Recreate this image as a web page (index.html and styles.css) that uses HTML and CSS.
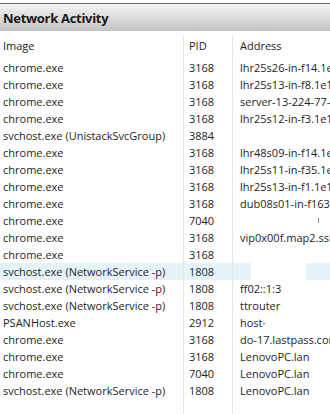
FILE: index.html
```html
<!DOCTYPE html>
<html lang="en">
<head>
    <meta charset="UTF-8">
    <meta name="viewport" content="width=device-width, initial-scale=1.0">
    <title>Network Activity</title>
    <link rel="stylesheet" href="styles.css">
</head>
<body>
    <div class="panel">
        <div class="titlebar">Network Activity</div>

        <div class="list">
            <div class="row head">
                <div class="cell">Image</div>
                <div class="cell pid">PID</div>
                <div class="cell addr">Address</div>
            </div>
            <div class="row"><div class="cell">chrome.exe</div><div class="cell pid">3168</div><div class="cell addr">lhr25s26-in-f14.1e100.net</div></div>
            <div class="row"><div class="cell">chrome.exe</div><div class="cell pid">3168</div><div class="cell addr">lhr25s13-in-f8.1e100.net</div></div>
            <div class="row"><div class="cell">chrome.exe</div><div class="cell pid">3168</div><div class="cell addr">server-13-224-77-4.lhr62.r.cloudfront.net</div></div>
            <div class="row"><div class="cell">chrome.exe</div><div class="cell pid">3168</div><div class="cell addr">lhr25s12-in-f3.1e100.net</div></div>
            <div class="row"><div class="cell">svchost.exe (UnistackSvcGroup)</div><div class="cell pid">3884</div><div class="cell addr"></div></div>
            <div class="row"><div class="cell">chrome.exe</div><div class="cell pid">3168</div><div class="cell addr">lhr48s09-in-f14.1e100.net</div></div>
            <div class="row"><div class="cell">chrome.exe</div><div class="cell pid">3168</div><div class="cell addr">lhr25s11-in-f35.1e100.net</div></div>
            <div class="row"><div class="cell">chrome.exe</div><div class="cell pid">3168</div><div class="cell addr">lhr25s13-in-f1.1e100.net</div></div>
            <div class="row"><div class="cell">chrome.exe</div><div class="cell pid">3168</div><div class="cell addr">dub08s01-in-f163.1e100.net</div></div>
            <div class="row"><div class="cell">chrome.exe</div><div class="cell pid">7040</div><div class="cell addr"><span class="tick"></span></div></div>
            <div class="row"><div class="cell">chrome.exe</div><div class="cell pid">3168</div><div class="cell addr">vip0x00f.map2.ssl.hwcdn.net</div></div>
            <div class="row"><div class="cell">chrome.exe</div><div class="cell pid">3168</div><div class="cell addr"></div></div>
            <div class="row hot"><div class="cell">svchost.exe (NetworkService -p)</div><div class="cell pid">1808</div><div class="cell addr"><span class="ghost"></span></div></div>
            <div class="row"><div class="cell">svchost.exe (NetworkService -p)</div><div class="cell pid">1808</div><div class="cell addr">ff02::1:3</div></div>
            <div class="row"><div class="cell">svchost.exe (NetworkService -p)</div><div class="cell pid">1808</div><div class="cell addr">ttrouter</div></div>
            <div class="row"><div class="cell">PSANHost.exe</div><div class="cell pid">2912</div><div class="cell addr">host&middot;</div></div>
            <div class="row"><div class="cell">chrome.exe</div><div class="cell pid">3168</div><div class="cell addr">do-17.lastpass.com</div></div>
            <div class="row"><div class="cell">chrome.exe</div><div class="cell pid">3168</div><div class="cell addr">LenovoPC.lan</div></div>
            <div class="row"><div class="cell">chrome.exe</div><div class="cell pid">7040</div><div class="cell addr">LenovoPC.lan</div></div>
            <div class="row"><div class="cell">svchost.exe (NetworkService -p)</div><div class="cell pid">1808</div><div class="cell addr">LenovoPC.lan</div></div>
            <div class="row filler"><div class="cell"></div><div class="cell pid"></div><div class="cell addr"></div></div>
        </div>
    </div>
</body>
</html>
```

FILE: styles.css
```css
html, body {
    height: 100%;
}

body {
    margin: 0;
    background-color: #fff;
    font-family: 'Open Sans', 'Noto Sans', sans-serif;
    font-size: 11px;
    color: #1e1e1e;
    overflow: hidden;
}

.panel {
    display: flex;
    flex-direction: column;
    height: 100%;
    padding-top: 3px;
    box-sizing: border-box;
}

.titlebar {
    height: 27px;
    padding-left: 3px;
    border-top: 1px solid #6a6a6a;
    background: linear-gradient(#f4f4f4, #c4c4c4);
    font-size: 13px;
    font-weight: bold;
    letter-spacing: -0.3px;
    line-height: 28px;
    color: #1a1a1a;
}

.list {
    flex: 1;
    display: flex;
    flex-direction: column;
    padding-top: 4px;
}

.row {
    display: grid;
    grid-template-columns: 183px 49px 1fr;
    height: 17px;
    line-height: 17px;
    white-space: nowrap;
}

.row.head {
    height: 24px;
    line-height: 22px;
}

.row.filler {
    flex: 1;
}

.row.hot {
    background-color: #e5f3fb;
}

.cell {
    overflow: hidden;
    padding-left: 3px;
}

.pid,
.addr {
    border-left: 1px solid #e5e5e5;
    padding-left: 5px;
}

.addr {
    position: relative;
    padding-left: 7px;
}

.tick {
    position: absolute;
    left: 85px;
    top: 6px;
    width: 1px;
    height: 5px;
    background-color: #888;
}

.ghost {
    position: absolute;
    left: 18px;
    right: 24px;
    top: 0;
    bottom: 0;
    background-color: #fff;
}
```
